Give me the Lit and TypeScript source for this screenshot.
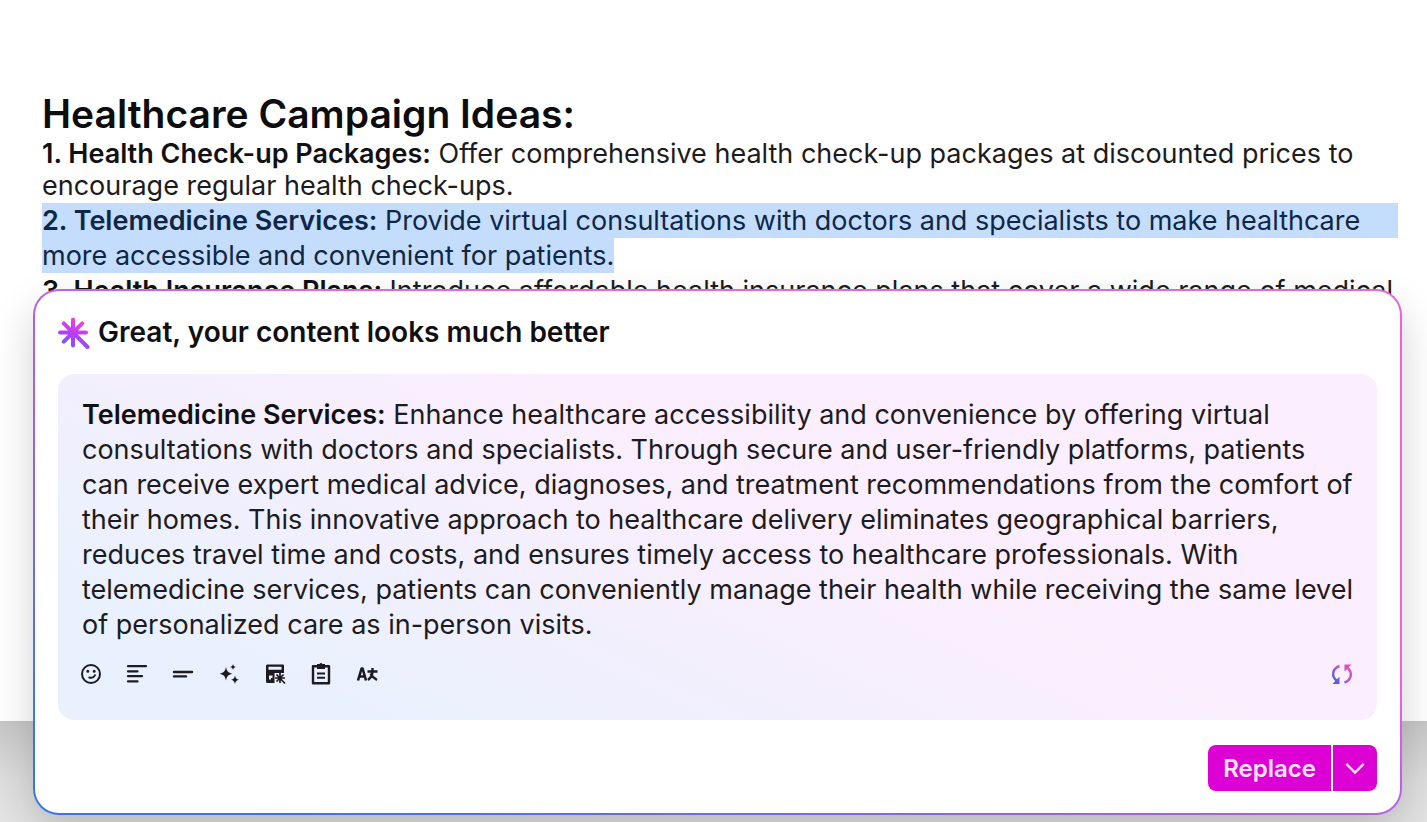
import { LitElement, html, css, svg } from "lit";
import { customElement } from "lit/decorators.js";

const icons = {
  smile: svg`<circle cx="12" cy="12" r="9"/><path fill="currentColor" stroke="none" d="M7.300 9.300a1.500 1.500 0 1 1 3 0 1.500 1.500 0 0 1-3 0zM13.700 9.300a1.500 1.500 0 1 1 3 0 1.500 1.500 0 0 1-3 0z"/><path d="M10.300 15.500c2.600.9 5-.4 5.600-2.200" stroke-linecap="round"/>`,
  lengthen: svg`<path d="M3 4.200h18M3 9.400h9.500M3 14.200h14M3 19.400h9.500" stroke-width="2.200" stroke-linecap="round"/>`,
  shorten: svg`<path d="M3 10h18M3 14.400h12" stroke-width="2.400" stroke-linecap="round"/>`,
  sparkles: svg`<path fill="currentColor" stroke="none" d="M9 5c1 4.300 2 5.600 6.300 6.700-4.300 1.100-5.300 2.400-6.300 6.700-1-4.300-2-5.600-6.300-6.700C7 10.600 8 9.300 9 5zM16 2c.5 2 .9 2.500 2.800 3-1.900.5-2.300 1-2.800 3-.5-2-.9-2.500-2.800-3 1.900-.5 2.300-1 2.800-3zM18 13.400c.8 2.900 1.300 3.500 4 4.300-2.700.8-3.200 1.500-4 4.300-.8-2.800-1.300-3.500-4-4.300 2.700-.8 3.200-1.400 4-4.300z"/>`,
  form: svg`<path fill="currentColor" stroke="none" fill-rule="evenodd" d="M4.500 2.500H20a1 1 0 0 1 1 1V11H11.500v10H4.500A1.500 1.500 0 0 1 3 19.500v-16A1.500 1.500 0 0 1 4.500 2.500zM5.500 4.800v3h13v-3zM6 13.500v4h2v-1.500h1.500v-2.500z"/><path stroke-width="1.700" d="M17 11v10M12 16h10M13.500 12.500l8.500 9M13.500 19.500l7-7"/>`,
  clipboard: svg`<path stroke-width="2.400" d="M4 4.200h16v17H4z" stroke-linejoin="round"/><path fill="currentColor" stroke="none" d="M8 2h2.500a1.700 1.700 0 0 1 3 0H16v5H8z"/><path d="M8 11.500h8M8 15.800h8"/>`,
  translate: svg`<path d="M3 18.500 6.600 6.500h1L11 18.500M4.500 14.500h5" stroke-width="2.600" stroke-linejoin="round"/><path d="M12.500 9.500h10M17.500 6v3.500c0 4-2 6.500-4.500 8.500M15.500 11.500c1.500 3 3.500 5 6.500 6.500" stroke-width="2.400"/>`,
};

const tools = [
  { label: "Change tone", icon: icons.smile },
  { label: "Make longer", icon: icons.lengthen },
  { label: "Make shorter", icon: icons.shorten },
  { label: "Improve writing", icon: icons.sparkles },
  { label: "Generate from form", icon: icons.form },
  { label: "Summarize", icon: icons.clipboard },
  { label: "Translate", icon: icons.translate },
];

@customElement("app-root")
export class AppRoot extends LitElement {
  static styles = css`
    :host {
      display: block;
      position: relative;
      min-height: 100vh;
      overflow: hidden;
      background: linear-gradient(#c6c6c6, #dedede 60px, #e4e4e4) bottom / 100% 101px no-repeat;
      font-family: Inter, "Liberation Sans", sans-serif;
      font-optical-sizing: none;
      font-size: 27px;
      line-height: 35px;
      color: #1d1b20;
    }
    * { box-sizing: border-box; }
    h1, h2, p { margin: 0; }
    strong, h1, h2 { font-weight: 600; }
    strong { color: #111114; }
    .document {
      min-height: calc(100vh - 101px);
      padding: 90px 29px 0 42px;
      background: #fff;
    }
    h1 { font-size: 39px; line-height: 48px; color: #0d0d0f; }
    .idea { line-height: 32px; margin-bottom: 1px; }
    .selected, .selected strong { color: #0e2748; }
    .line { display: block; background: #c5ddfc; }
    .tail { display: inline-block; background: #c5ddfc; }
    .card {
      position: absolute;
      top: 289px;
      left: 33px;
      right: 25px;
      padding: 22px 23px;
      border: 2px solid transparent;
      border-radius: 26px;
      background:
        linear-gradient(#fff, #fff) padding-box,
        linear-gradient(20deg, #3478e8 8%, #a060e4 38%, #b85fe2 50%, #e566da 62%) border-box;
      box-shadow: 0 18px 42px rgba(0, 0, 0, 0.18);
    }
    header { display: flex; align-items: center; gap: 8px; margin-bottom: 22px; height: 39px; }
    h2 { font-size: 28px; color: #101014; }
    .logo { width: 32px; height: 32px; }
    .result {
      padding: 23px 20px 30px 24px;
      border-radius: 16px;
      background: linear-gradient(25deg, #e8f1fd 12%, #f5effd 42%, #fbeefe 60%);
    }
    .tools { display: flex; align-items: center; gap: 22px; height: 32px; margin: 16px 3px 0 -3px; }
    button { font: inherit; color: inherit; border: 0; padding: 0; background: none; cursor: pointer; }
    .tool { width: 24px; height: 24px; display: grid; }
    .tool svg { width: 24px; height: 24px; fill: none; stroke: currentColor; stroke-width: 2; }
    .tool:last-child { margin-left: auto; }
    .actions { display: flex; justify-content: flex-end; gap: 2px; margin-top: 25px; }
    .action {
      height: 46px;
      background: #dc00d5;
      color: #ffe4fb;
      font-size: 24px;
      font-weight: 600;
    }
    .replace { padding: 0 15px; border-radius: 8px 0 0 8px; }
    .more { display: grid; place-items: center; width: 44px; border-radius: 0 8px 8px 0; }
    .more svg { width: 22px; height: 22px; fill: none; stroke: currentColor; stroke-width: 2.4; }
  `;

  render() {
    return html`
      <main class="document">
        <h1>Healthcare Campaign Ideas:</h1>
        <p class="idea">
          <strong>1. Health Check-up Packages:</strong> Offer comprehensive health check-up packages at discounted
          prices to encourage regular health check-ups.
        </p>
        <p class="selected">
          <span class="line"><strong>2. Telemedicine Services:</strong> Provide virtual consultations with doctors and specialists to make healthcare</span>
          <span class="tail">more accessible and convenient for patients.</span>
        </p>
        <p><strong>3. Health Insurance Plans:</strong> Introduce affordable health insurance plans that cover a wide range of medical</p>
      </main>
      <section class="card" aria-labelledby="card-title">
        <header>
          <svg class="logo" viewBox="0 0 32 32" aria-hidden="true">
            <defs>
              <linearGradient id="mark" gradientUnits="userSpaceOnUse" x1="8" y1="30" x2="18" y2="2">
                <stop offset="0" stop-color="#7257ff" />
                <stop offset="0.5" stop-color="#b83df4" />
                <stop offset="1" stop-color="#f044dc" />
              </linearGradient>
            </defs>
            <path d="M15 2.500v26M2 15.500h26M5.800 6.300 29.500 30M24.200 6.300 5.800 24.700" fill="none" stroke="url(#mark)" stroke-width="4" stroke-linecap="round" />
          </svg>
          <h2 id="card-title">Great, your content looks much better</h2>
        </header>
        <div class="result">
          <p>
            <strong>Telemedicine Services:</strong> Enhance healthcare accessibility and convenience by offering virtual
            consultations with doctors and specialists. Through secure and user-friendly platforms, patients can receive
            expert medical advice, diagnoses, and treatment recommendations from the comfort of their homes. This
            innovative approach to healthcare delivery eliminates geographical barriers, reduces travel time and costs,
            and ensures timely access to healthcare professionals. With telemedicine services, patients can conveniently
            manage their health while receiving the same level of personalized care as in-person visits.
          </p>
          <div class="tools">
            ${tools.map(
              (t) => html`<button class="tool" aria-label=${t.label}><svg viewBox="0 0 24 24" aria-hidden="true">${t.icon}</svg></button>`
            )}
            <button class="tool" aria-label="Regenerate">
              <svg viewBox="0 0 24 24" aria-hidden="true">
                <defs>
                  <linearGradient id="swap" gradientUnits="userSpaceOnUse" x1="3" y1="20" x2="21" y2="6">
                    <stop offset="0" stop-color="#3c62d8" />
                    <stop offset="0.5" stop-color="#a45bd8" />
                    <stop offset="1" stop-color="#ee4bb5" />
                  </linearGradient>
                </defs>
                <path stroke="url(#swap)" stroke-width="2.400" d="M9.500 4C2.500 6.500 1 14 6.500 18.500M14.500 20.500C21.500 18 23 10.500 17.500 6" />
                <path fill="url(#swap)" stroke="none" d="M9.500 14.500V22H2.500zM14.500 9.500V2.500h7z" />
              </svg>
            </button>
          </div>
        </div>
        <div class="actions">
          <button class="action replace">Replace</button>
          <button class="action more" aria-label="More options">
            <svg viewBox="0 0 24 24" aria-hidden="true"><path d="m2.500 7.500 9.500 9.500 9.500-9.500" /></svg>
          </button>
        </div>
      </section>
    `;
  }
}
